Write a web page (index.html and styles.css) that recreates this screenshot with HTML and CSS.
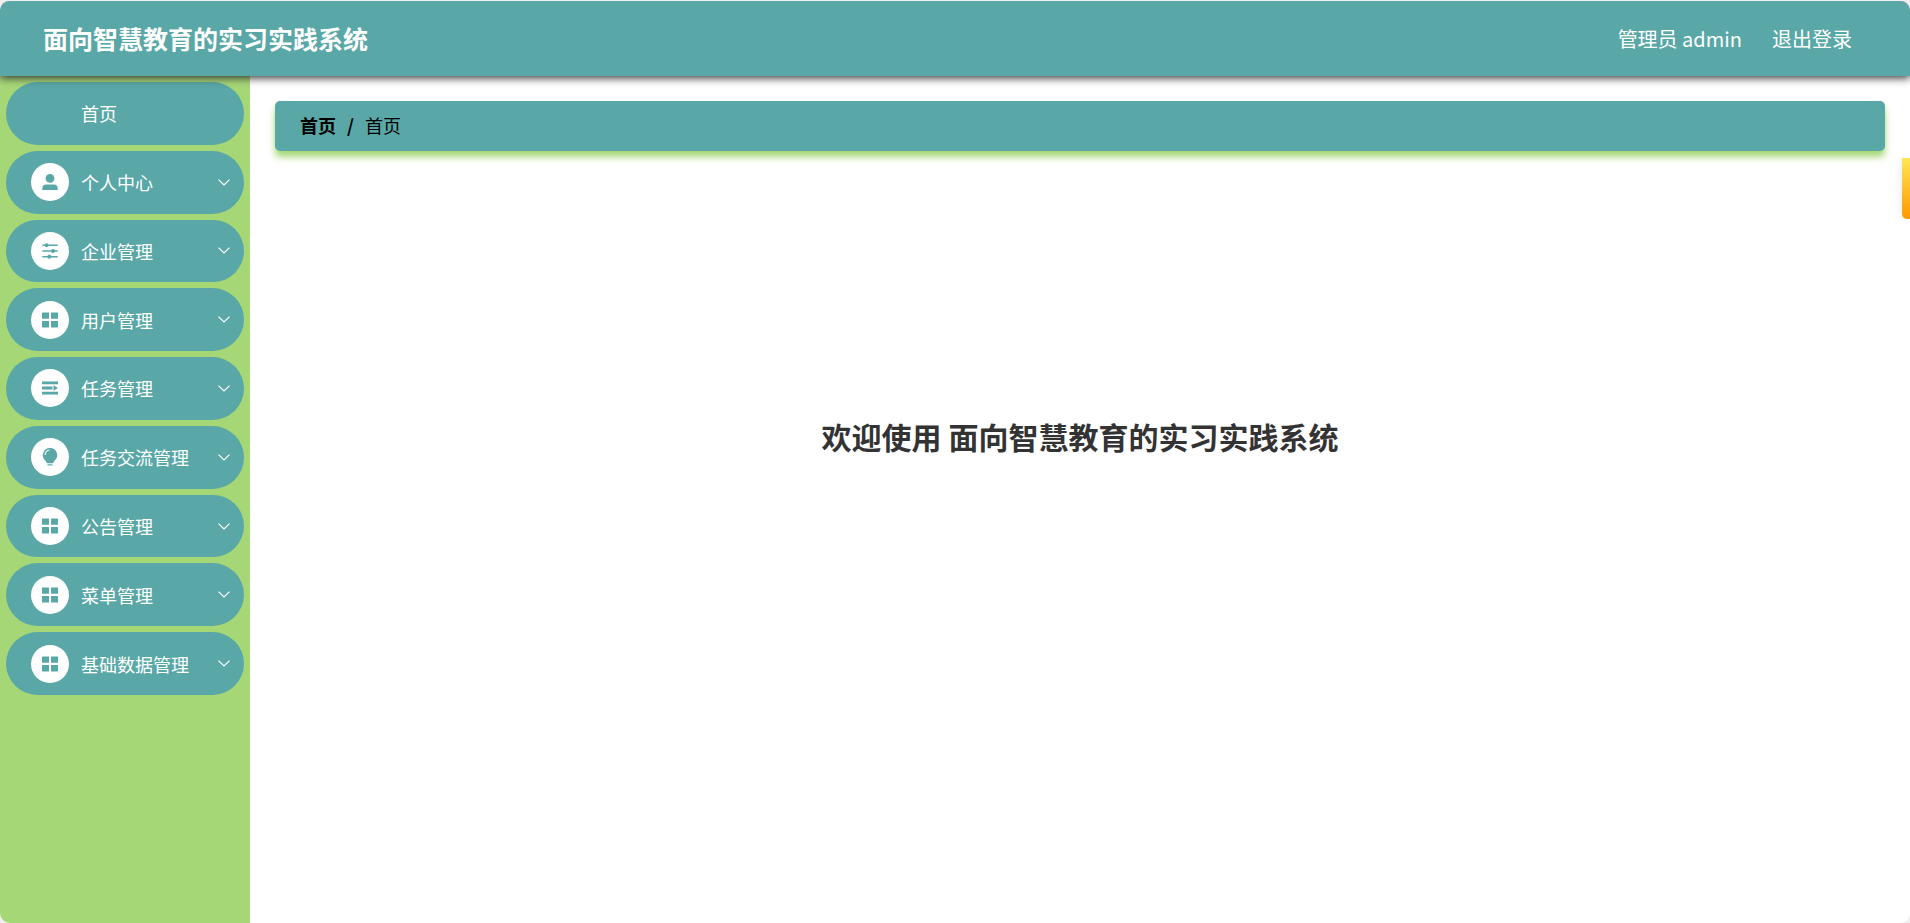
FILE: index.html
```html
<!DOCTYPE html>
<html lang="zh-CN">
<head>
<meta charset="utf-8">
<title>面向智慧教育的实习实践系统</title>
<link rel="stylesheet" href="styles.css">
</head>
<body>
<svg class="sprite" aria-hidden="true">
  <symbol id="i-user" viewBox="0 0 16 16"><circle cx="8" cy="4.4" r="4.4"/><path d="M0.300 16v-1.600A3.800 3.800 0 0 1 4.100 10.600h7.800a3.800 3.800 0 0 1 3.800 3.800V16z"/></symbol>
  <symbol id="i-sliders" viewBox="0 0 16 16"><path d="M0.300 1.600h15.400v1.400H0.300zM0.300 7.300h15.400v1.400H0.300zM0.300 13h15.400v1.400H0.300z"/><circle cx="4.600" cy="2.300" r="2"/><circle cx="11" cy="8" r="2"/><circle cx="7.300" cy="13.700" r="2"/></symbol>
  <symbol id="i-grid" viewBox="0 0 16 16"><path d="M0 0.500h7v6.300H0zM9 0.500h7v6.300H9zM0 9h7v6.500H0zM9 9h7v6.500H9z"/></symbol>
  <symbol id="i-unfold" viewBox="0 0 16 16"><path d="M0 1.400h16v2.800H0zM0 6.600h10.500v2.800H0zM0 11.800h16v2.800H0zM11.500 5.200L16 8l-4.500 2.800z"/></symbol>
  <symbol id="i-bulb" viewBox="0 0 16 18"><path fill-rule="evenodd" d="M8 0a7.200 7.200 0 0 1 4.400 12.900c-.7.600-1 1.300-1.300 2.400H4.900c-.3-1.100-.6-1.800-1.300-2.400A7.200 7.200 0 0 1 8 0zM7.700 1.500A5.300 5.300 0 0 0 2.500 7h1.100A4.200 4.200 0 0 1 7.700 2.600z"/><path d="M5.500 16.300h5v1.200h-5z"/></symbol>
  <symbol id="i-down" viewBox="0 0 12 7"><path d="M0.500 0.600L6 6l5.500-5.400" fill="none" stroke="currentColor" stroke-width="1.200"/></symbol>
</svg>
<div class="app">
  <header class="header">
    <h1 class="title">面向智慧教育的实习实践系统</h1>
    <div class="account">
      <span>管理员 admin</span>
      <a class="logout" href="#logout">退出登录</a>
    </div>
  </header>
  <div class="body">
    <nav class="sidebar" aria-label="主菜单">
      <ul class="menu">
        <li><a class="item" href="#home"><span class="label label-home">首页</span></a></li>
        <li><button class="item" type="button"><span class="badge"><svg class="icon"><use href="#i-user"/></svg></span><span class="label">个人中心</span><svg class="arrow"><use href="#i-down"/></svg></button></li>
        <li><button class="item" type="button"><span class="badge"><svg class="icon"><use href="#i-sliders"/></svg></span><span class="label">企业管理</span><svg class="arrow"><use href="#i-down"/></svg></button></li>
        <li><button class="item" type="button"><span class="badge"><svg class="icon"><use href="#i-grid"/></svg></span><span class="label">用户管理</span><svg class="arrow"><use href="#i-down"/></svg></button></li>
        <li><button class="item" type="button"><span class="badge"><svg class="icon"><use href="#i-unfold"/></svg></span><span class="label">任务管理</span><svg class="arrow"><use href="#i-down"/></svg></button></li>
        <li><button class="item" type="button"><span class="badge"><svg class="icon icon-tall"><use href="#i-bulb"/></svg></span><span class="label">任务交流管理</span><svg class="arrow"><use href="#i-down"/></svg></button></li>
        <li><button class="item" type="button"><span class="badge"><svg class="icon"><use href="#i-grid"/></svg></span><span class="label">公告管理</span><svg class="arrow"><use href="#i-down"/></svg></button></li>
        <li><button class="item" type="button"><span class="badge"><svg class="icon"><use href="#i-grid"/></svg></span><span class="label">菜单管理</span><svg class="arrow"><use href="#i-down"/></svg></button></li>
        <li><button class="item" type="button"><span class="badge"><svg class="icon"><use href="#i-grid"/></svg></span><span class="label">基础数据管理</span><svg class="arrow"><use href="#i-down"/></svg></button></li>
      </ul>
    </nav>
    <main class="main">
      <nav class="crumbs" aria-label="面包屑">
        <a class="crumb-root" href="#home">首页</a>
        <span class="crumb-sep">/</span>
        <span>首页</span>
      </nav>
      <div class="welcome"><h2 class="welcome-text">欢迎使用 面向智慧教育的实习实践系统</h2></div>
    </main>
  </div>
  <div class="side-tab"></div>
</div>
</body>
</html>
```
FILE: styles.css
```css
:root {
  --teal: #5aa7a7;
  --green: #a6d776;
}

* {
  box-sizing: border-box;
}

body {
  margin: 0;
  background: #f0f0f0;
  color: #000;
  font-family: "Noto Sans CJK SC", sans-serif;
  font-size: 18px;
}

a {
  color: inherit;
  text-decoration: none;
}

.sprite {
  display: none;
}

.app {
  position: relative;
  display: flex;
  flex-direction: column;
  min-height: 100vh;
  padding-top: 1px;
  border-radius: 10px;
  overflow: hidden;
}

.header {
  z-index: 1;
  display: flex;
  align-items: center;
  justify-content: space-between;
  height: 75px;
  padding: 0 58px 0 43px;
  border-radius: 10px 10px 0 0;
  background: var(--teal);
  box-shadow: 0 2px 8px #333;
  clip-path: inset(0 0 -20px 0);
  color: #fff;
}

.title {
  margin: 0;
  padding-bottom: 2px;
  font-size: 25px;
  font-weight: 700;
}

.account {
  display: flex;
  gap: 30px;
  font-size: 20px;
}

.body {
  display: flex;
  flex: 1;
  background: #fff;
}

.sidebar {
  flex: none;
  width: 250px;
  padding: 6px;
  background: var(--green);
}

.menu {
  display: grid;
  grid-auto-rows: 1fr;
  gap: 6px;
  min-height: 613px;
  margin: 0;
  padding: 0;
  list-style: none;
}

.item {
  display: flex;
  align-items: center;
  gap: 12px;
  width: 100%;
  height: 100%;
  padding: 0 14px 0 25px;
  border: 0;
  border-radius: 32px;
  background: var(--teal);
  color: #fff;
  font: inherit;
  text-align: left;
}

.badge {
  display: grid;
  place-items: center;
  width: 38px;
  height: 38px;
  border-radius: 50%;
  background: #fff;
  color: var(--teal);
}

.icon {
  width: 16px;
  height: 16px;
  fill: currentColor;
}

.icon-tall {
  height: 18px;
}

.label {
  flex: 1;
}

.label-home {
  padding-left: 50px;
}

.arrow {
  width: 12px;
  height: 7px;
}

.main {
  display: flex;
  flex: 1;
  flex-direction: column;
  padding: 25px;
}

.crumbs {
  display: flex;
  align-items: center;
  gap: 11px;
  height: 50px;
  padding: 0 25px 2px;
  border-radius: 5px;
  background: var(--teal);
  box-shadow: 0 6px 7px var(--green);
}

.crumb-root,
.crumb-sep {
  font-weight: 700;
}

.welcome {
  padding-top: 263px;
  text-align: center;
}

.welcome-text {
  margin: 0;
  color: #333;
  font-size: 30px;
  line-height: 44px;
}

.side-tab {
  position: absolute;
  top: 158px;
  right: 0;
  width: 8px;
  height: 61px;
  border-radius: 0 0 0 5px;
  background: linear-gradient(#ffe754, #ff9800);
  box-shadow: 0 0 10px rgba(0, 0, 0, 0.1);
}
```
